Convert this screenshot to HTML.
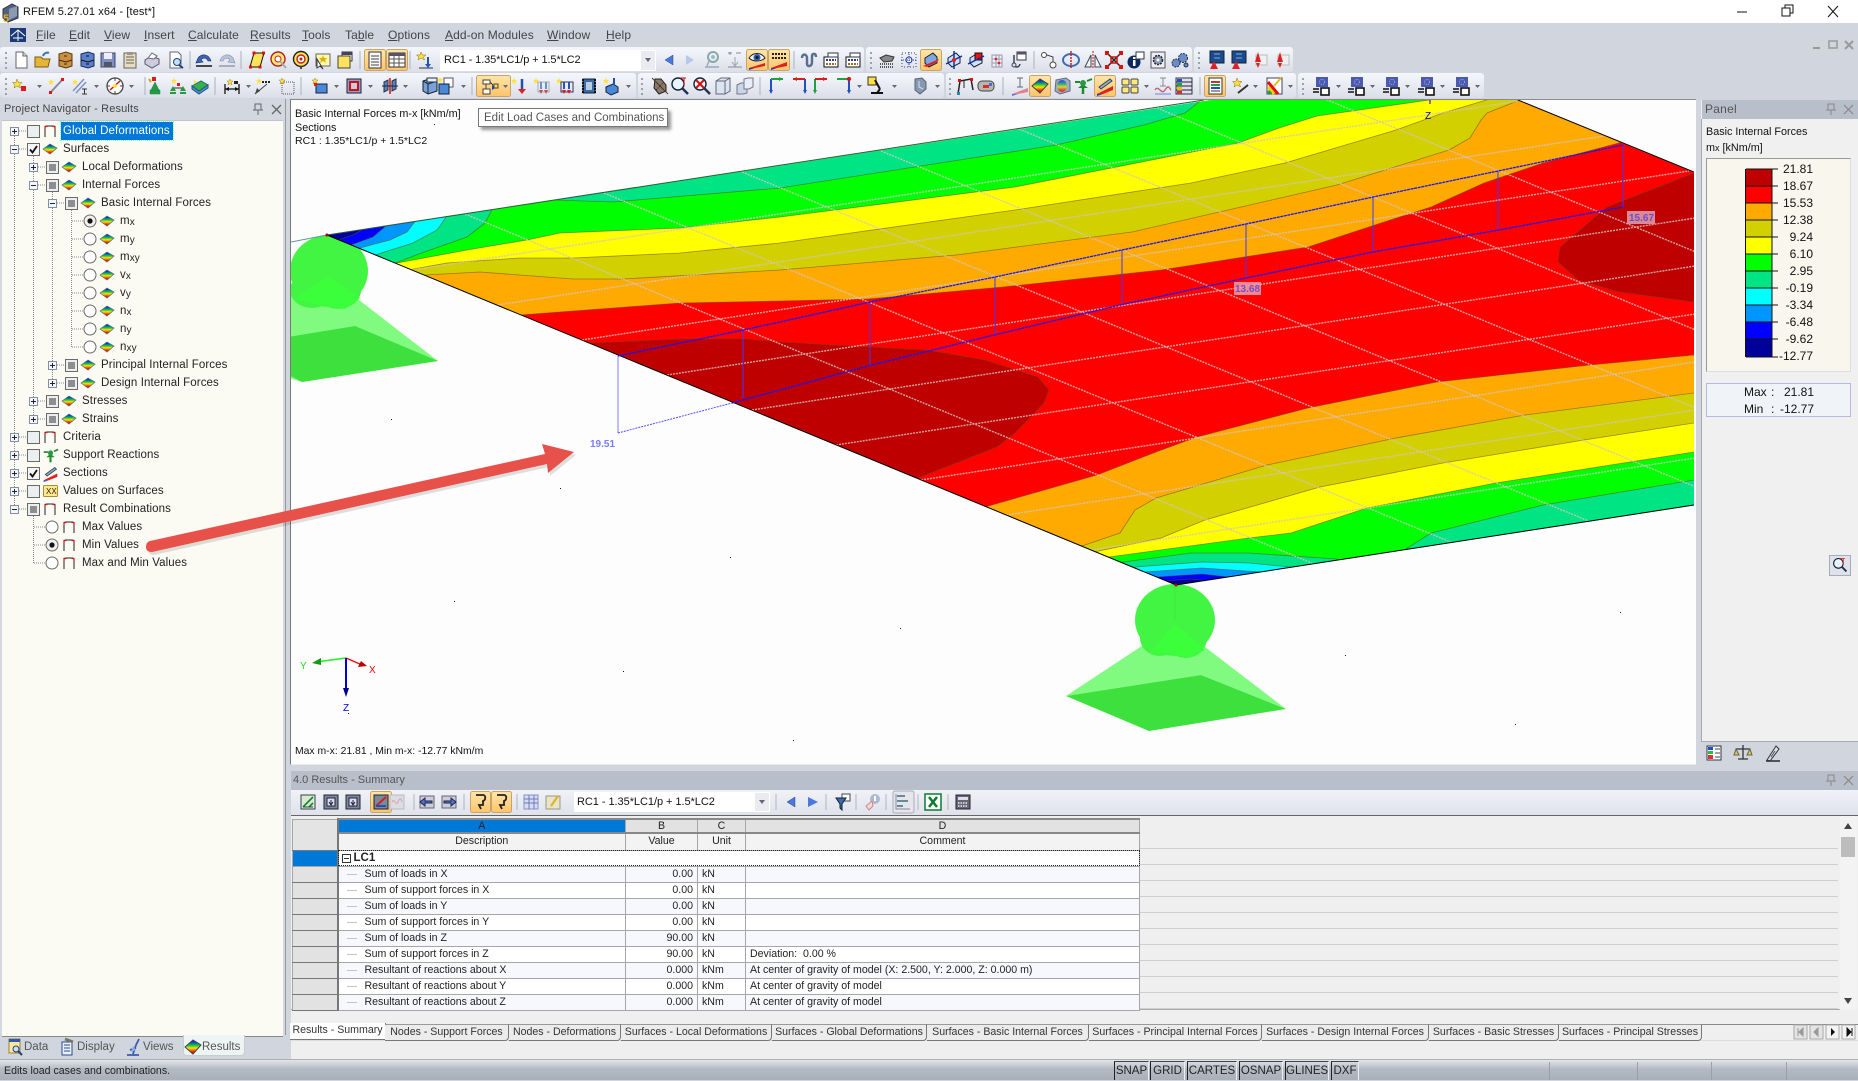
<!DOCTYPE html>
<html lang="en"><head><meta charset="utf-8"><title>RFEM 5.27.01 x64 - [test*]</title>
<style>
html,body{margin:0;padding:0}
body{position:relative;width:1858px;height:1080px;overflow:hidden;background:#d0d5de;font:11px "Liberation Sans",Arial,sans-serif;color:#222}
.a{position:absolute}
.t{position:absolute;white-space:nowrap;line-height:14px;height:14px}
.m{position:absolute;top:28px;font-size:12px;line-height:14px;color:#444;letter-spacing:.1px;white-space:nowrap}
.m u{text-decoration:underline}
.n{position:absolute;white-space:nowrap;font-size:11.5px;line-height:14px;color:#222;letter-spacing:.1px}
.n sub{font-size:10px;vertical-align:-1px;line-height:0}
.v{position:absolute;right:0;font-size:12px;line-height:14px;color:#111;text-align:right;width:60px}
svg{position:absolute;left:0;top:0;overflow:hidden}
table{border-collapse:collapse;table-layout:fixed;position:absolute;left:292px;top:818px;width:847px;font-size:10.6px;color:#222}
td{padding:0;border:1px solid #a6a6a6;overflow:hidden;white-space:nowrap;line-height:13px}
.rh{background:#e2e2e2;border-right:2px solid #777;border-bottom:1px solid #777}
.hd{background:#e2e2e2;text-align:center;border-bottom:2px solid #888;border-top:2px solid #888;font-size:10.6px}
.sh{background:#f3f3f3;text-align:center}
.d{padding-left:26px;background:linear-gradient(#c4c4c4,#c4c4c4) no-repeat 8px 50%/10px 1px}
.r{text-align:right;padding-right:4px}.u{padding-left:4px}.c{padding-left:4px}
.o td:not(.rh){background-color:#f6f8fd}
.w td:not(.rh){background-color:#fff}
.tab{position:absolute;top:1024px;height:15px;line-height:15px;background:#ececec;border:1px solid #777;border-top:1px solid #999;border-left:0;border-radius:0 0 4px 0;text-align:center;color:#333;font-size:10.6px;white-space:nowrap;overflow:hidden}
.sp{position:absolute;top:1061px;height:19px;line-height:19px;border-left:1px solid #222;border-top:1px solid #444;border-right:1px solid #eee;text-align:center;color:#222;font-size:11.5px;box-sizing:border-box}
</style></head><body>

<!-- title bar -->
<div class="a" style="left:0;top:0;width:1858px;height:23px;background:#fff"></div>
<div class="t" style="left:23px;top:5px;font-size:11px;color:#111;letter-spacing:.1px">RFEM 5.27.01 x64 - [test*]</div>

<!-- menu -->
<div class="m" style="left:36px"><u>F</u>ile</div><div class="m" style="left:69px"><u>E</u>dit</div><div class="m" style="left:104px"><u>V</u>iew</div><div class="m" style="left:144px"><u>I</u>nsert</div><div class="m" style="left:188px"><u>C</u>alculate</div><div class="m" style="left:250px"><u>R</u>esults</div><div class="m" style="left:302px"><u>T</u>ools</div><div class="m" style="left:345px">Ta<u>b</u>le</div><div class="m" style="left:388px"><u>O</u>ptions</div><div class="m" style="left:445px"><u>A</u>dd-on Modules</div><div class="m" style="left:547px"><u>W</u>indow</div><div class="m" style="left:606px"><u>H</u>elp</div>

<!-- toolbars -->
<div class="a" style="left:0;top:47px;width:864px;height:25px;background:linear-gradient(#f5f7fb,#dcdfe9);border-radius:3px"></div>
<div class="a" style="left:866px;top:47px;width:326px;height:25px;background:linear-gradient(#f5f7fb,#dcdfe9);border-radius:3px"></div>
<div class="a" style="left:1194px;top:47px;width:99px;height:25px;background:linear-gradient(#f5f7fb,#dcdfe9);border-radius:3px"></div>
<div class="a" style="left:0;top:73px;width:636px;height:25px;background:linear-gradient(#f5f7fb,#dcdfe9);border-radius:3px"></div>
<div class="a" style="left:638px;top:73px;width:306px;height:25px;background:linear-gradient(#f5f7fb,#dcdfe9);border-radius:3px"></div>
<div class="a" style="left:946px;top:73px;width:350px;height:25px;background:linear-gradient(#f5f7fb,#dcdfe9);border-radius:3px"></div>
<div class="a" style="left:1298px;top:73px;width:186px;height:25px;background:linear-gradient(#f5f7fb,#dcdfe9);border-radius:3px"></div>
<div class="a" style="left:440px;top:50px;width:216px;height:21px;background:#fff"></div>
<div class="a" style="left:641px;top:51px;width:14px;height:19px;background:#e9ebf0"></div>
<div class="t" style="left:444px;top:53px;font-size:11px;color:#111;letter-spacing:-.1px">RC1 - 1.35*LC1/p + 1.5*LC2</div>

<!-- navigator -->
<div class="a" style="left:0;top:99px;width:285px;height:936px;background:#d3d7df;border-right:1px solid #999"></div>
<div class="t" style="left:4px;top:102px;font-size:11px;color:#444;letter-spacing:.15px">Project Navigator - Results</div>
<div class="a" style="left:2px;top:120px;width:281px;height:915px;background:#fbfbf3;border-top:1px solid #c0c4cc;border-bottom:1px solid #888"></div>
<div class="a" style="left:61px;top:122px;width:112px;height:18px;background:#0078d7;outline:1px dotted #7fb"></div>

<div class="n" style="left:63px;top:124px;color:#fff">Global Deformations</div>
<div class="n" style="left:63px;top:142px">Surfaces</div>
<div class="n" style="left:82px;top:160px">Local Deformations</div>
<div class="n" style="left:82px;top:178px">Internal Forces</div>
<div class="n" style="left:101px;top:196px">Basic Internal Forces</div>
<div class="n" style="left:120px;top:214px">m<sub>x</sub></div>
<div class="n" style="left:120px;top:232px">m<sub>y</sub></div>
<div class="n" style="left:120px;top:250px">m<sub>xy</sub></div>
<div class="n" style="left:120px;top:268px">v<sub>x</sub></div>
<div class="n" style="left:120px;top:286px">v<sub>y</sub></div>
<div class="n" style="left:120px;top:304px">n<sub>x</sub></div>
<div class="n" style="left:120px;top:322px">n<sub>y</sub></div>
<div class="n" style="left:120px;top:340px">n<sub>xy</sub></div>
<div class="n" style="left:101px;top:358px">Principal Internal Forces</div>
<div class="n" style="left:101px;top:376px">Design Internal Forces</div>
<div class="n" style="left:82px;top:394px">Stresses</div>
<div class="n" style="left:82px;top:412px">Strains</div>
<div class="n" style="left:63px;top:430px">Criteria</div>
<div class="n" style="left:63px;top:448px">Support Reactions</div>
<div class="n" style="left:63px;top:466px">Sections</div>
<div class="n" style="left:63px;top:484px">Values on Surfaces</div>
<div class="n" style="left:63px;top:502px">Result Combinations</div>
<div class="n" style="left:82px;top:520px">Max Values</div>
<div class="n" style="left:82px;top:538px">Min Values</div>
<div class="n" style="left:82px;top:556px">Max and Min Values</div>

<!-- nav tabs -->
<div class="a" style="left:183px;top:1035px;width:60px;height:20px;background:#eef3f4;border-radius:0 0 4px 4px;border:1px solid #c4d0d0;border-top:0"></div>
<div class="t" style="left:24px;top:1040px;font-size:11.5px;color:#555">Data</div>
<div class="t" style="left:77px;top:1040px;font-size:11.5px;color:#555">Display</div>
<div class="t" style="left:143px;top:1040px;font-size:11.5px;color:#555">Views</div>
<div class="t" style="left:202px;top:1040px;font-size:11.5px;color:#555">Results</div>

<!-- viewport -->
<div class="a" style="left:290px;top:99px;width:1406px;height:666px;background:#fdfdfd;border-left:1px solid #777;border-top:1px solid #8a8a8a;box-sizing:border-box;border-bottom:1px solid #e8e8e8"></div>

<svg width="1858" height="1080" viewBox="0 0 1858 1080">
<defs>
<clipPath id="vp"><rect x="291" y="100" width="1403" height="664"/></clipPath>
<clipPath id="pl"><polygon points="327,235 1434,66 1800,216 1800,489 1176,585"/></clipPath>
</defs>
<g clip-path="url(#vp)">
<!-- left support -->
<polygon points="328,276 438,361 302,382 270,372 270,300" fill="#80fb80"/>
<polygon points="355,326 438,361 302,382 270,365 270,340" fill="#3ee03e"/>
<ellipse cx="329" cy="271" rx="39" ry="36" fill="#43f543"/>
<ellipse cx="312" cy="290" rx="22" ry="18" fill="#43f543"/><ellipse cx="338" cy="290" rx="23" ry="19" fill="#43f543"/>
<polygon points="328,276 360,298 345,309 320,305 300,300 296,298" fill="#3cff3c"/>
<!-- bottom support -->
<polygon points="1175,624 1286,709 1201,675 1066,696" fill="#80fb80"/>
<polygon points="1066,696 1201,675 1286,709 1149,731" fill="#3ee03e"/>
<ellipse cx="1175" cy="620" rx="40" ry="36" fill="#43f543"/>
<ellipse cx="1160" cy="638" rx="20" ry="18" fill="#43f543"/><ellipse cx="1186" cy="638" rx="21" ry="20" fill="#43f543"/>
<polygon points="1175,624 1205,650 1190,657 1170,654 1150,652" fill="#3cff3c"/>
<path d="M1175 586v34" stroke="#38e038" stroke-width="1" opacity=".6"/>
<line x1="291" y1="242" x2="327" y2="235" stroke="#5a9a9a" stroke-width="1"/>

<!-- plate -->
<g clip-path="url(#pl)" stroke="#6a4a1c" stroke-opacity=".6" stroke-width=".8">
<rect x="300" y="50" width="1500" height="560" fill="#f00" stroke="none"/>
<path fill="#bf0000" d="M590 343L680 339L747 339L780 342L927 350L985 360L1038 377L1049 390L1044 403L1015 433L997 447L918 478L800 480L500 340Z"/>
<path fill="#bf0000" d="M1800 120L1694 173L1607 207L1560 247L1558 262L1578 280L1619 292L1694 302L1800 320Z"/>
<!-- top side -->
<path fill="#ffaa00" d="M300 315L520 315L613 308L680 303L780 301L868 299L1003 287L1161 270L1308 247L1384 222L1431 207L1484 183L1543 163L1619 143L1800 0L200 0Z"/>
<path fill="#d2d000" d="M300 275L425 275L480 272L573 279L623 279L780 270L956 255L1132 232L1337 185L1449 150L1470 138L1481 120L1487 113L1525 98L1800 0L200 0Z"/>
<path fill="#ff0" d="M300 270L408 270L447 263L520 258L573 258L680 253L780 243L1015 210L1191 183L1285 163L1396 130L1443 113L1493 98L1800 0L200 0Z"/>
<path fill="#0f0" d="M300 263L397 263L467 250L527 240L560 233L680 228L780 217L1015 187L1238 143L1279 128L1317 116L1443 98L1800 0L200 0Z"/>
<path fill="#00e484" d="M300 263L395 263L430 250L467 237L485 223L493 208L493 90L200 100Z"/>
<path fill="#00e484" d="M553 200L613 202L780 188L1056 145L1144 125L1185 113L1204 98L1300 0L553 0Z"/>
<path fill="#0ff" d="M300 255L375 255L413 243L437 230L447 216L447 100L200 100Z"/>
<path fill="#0096ff" d="M300 248L360 248L390 240L407 232L416 220L416 100L200 100Z"/>
<path fill="#00f" d="M300 245L351 245L373 237L386 226L386 100L200 100Z"/>
<path fill="#00009a" d="M300 240L338 240L353 235L362 230L362 100L200 100Z"/>
<!-- bottom side -->
<path fill="#ffaa00" d="M985 507L1097 475L1156 452L1197 437L1308 408L1437 382L1590 365L1694 355L1850 340L1850 1000L1000 1000Z"/>
<path fill="#d2d000" d="M1079 547L1120 533L1135 510L1156 498L1267 465L1396 438L1525 415L1694 393L1850 370L1850 1000L1080 1000Z"/>
<path fill="#ff0" d="M1094 552L1161 538L1205 520L1320 487L1443 463L1584 440L1694 423L1850 400L1850 1000L1094 1000Z"/>
<path fill="#0f0" d="M1109 557L1249 538L1291 533L1367 508L1496 483L1694 452L1850 420L1850 1000L1109 1000Z"/>
<path fill="#00e484" d="M1123 562L1191 553L1249 553L1337 559L1337 700L1123 700Z"/>
<path fill="#00e484" d="M1401 552L1431 533L1543 505L1694 480L1850 450L1850 700L1401 700Z"/>
<path fill="#0ff" d="M1135 567L1202 562L1249 563L1291 567L1291 700L1135 700Z"/>
<path fill="#0096ff" d="M1144 572L1202 568L1261 572L1261 700L1144 700Z"/>
<path fill="#00f" d="M1156 577L1202 574L1229 577L1229 700L1156 700Z"/>
<path fill="#00009a" d="M1164 581L1190 579L1211 581L1211 700L1164 700Z"/>
<!-- grid -->
<g stroke="#d4c4c4" stroke-opacity=".85" stroke-width="1.4" stroke-dasharray="2 1" fill="none">
<path d="M412 270L1519 101M497 305L1604 136M582 340L1689 171M667 375L1774 206M752 410L1800 250M836 445L1800 298M921 480L1800 346M1006 515L1800 394M1091 550L1800 442"/>
<path d="M465 214L1314 564M604 193L1453 543M742 172L1591 522M881 151L1730 501M1019 129L1800 451M1157 108L1800 373M1296 87L1800 295"/>
</g>
</g>
<!-- plate edges -->
<path d="M327 235L1176 585L1694 505M1518 100L1694 172" fill="none" stroke="#000" stroke-width="1"/>
<path d="M327 235L1204 100" fill="none" stroke="#2a5a40" stroke-width="1"/>
<circle cx="327" cy="235" r="1.5" fill="#a00"/><circle cx="1176" cy="585" r="1.5" fill="#a00"/>

<!-- section diagram -->
<path d="M618 356V433" stroke="#8080ff" fill="none"/>
<path d="M743 330V398M870 302V366M995 277V335M1122 250V305M1246 224V278M1373 197V252M1498 171V230M1623 145V207" stroke="#3a3aff" stroke-width="1" fill="none"/>
<path d="M618 433L732 403" stroke="#5050ff" stroke-dasharray="2 1" fill="none"/>
<path d="M732 403L780 390L868 366L994 335L1120 305L1246 278L1373 252L1499 230L1623 207" stroke="#1515ff" stroke-width="1.3" stroke-dasharray="3 .6" fill="none"/>
<path d="M618 356L743 330L780 322L870 302L995 277L1122 250L1246 224L1373 197L1498 171L1623 145" stroke="#1515ff" stroke-width="1.3" stroke-dasharray="3 .6" fill="none"/>
<rect x="1234" y="282" width="27" height="13" fill="#f6a0a8" opacity=".85"/>
<rect x="1627" y="211" width="28" height="13" fill="#e0a0b0" opacity=".85"/>
<g font-family="Liberation Sans,Arial,sans-serif" font-weight="bold" font-size="10">
<text x="590" y="447" fill="#7a7aff">19.51</text>
<text x="1235" y="292" fill="#7050d0">13.68</text>
<text x="1629" y="221" fill="#6a50c8">15.67</text>
</g>
<text x="1425" y="119" font-family="Liberation Sans,Arial,sans-serif" font-size="10" fill="#0000d0">Z</text>
<path d="M1430 100v4" stroke="#0000d0"/>
<!-- specks -->
<g fill="#111"><rect x="434" y="124" width="1" height="1"/><rect x="391" y="419" width="1" height="1"/><rect x="560" y="488" width="1" height="1"/><rect x="900" y="628" width="1" height="1"/><rect x="1345" y="655" width="1" height="1"/><rect x="1620" y="612" width="1" height="1"/><rect x="1515" y="724" width="1" height="1"/><rect x="793" y="740" width="1" height="1"/><rect x="730" y="557" width="1" height="1"/><rect x="454" y="601" width="1" height="1"/><rect x="623" y="671" width="1" height="1"/><rect x="348" y="713" width="1" height="1"/></g>
<!-- axes -->
<path d="M346 658L316 662" stroke="#22ee22" stroke-width="1.5"/><path d="M312 663L321 658L321 665Z" fill="#119911"/>
<path d="M346 658L362 665" stroke="#f00" stroke-width="1.3"/><path d="M367 666L358 667L361 661Z" fill="#b00"/>
<path d="M346 658V690" stroke="#0000e0" stroke-width="2"/><path d="M346 697L343 688L349 688Z" fill="#000090"/>
<g font-family="Liberation Sans,Arial,sans-serif" font-size="10"><text x="300" y="669" fill="#22dd22">Y</text><text x="369" y="673" fill="#f00">X</text><text x="343" y="711" fill="#0000e0">Z</text></g>
</g>
</svg>

<!-- viewport text -->
<div class="t" style="left:295px;top:107px;font-size:10.8px;color:#111">Basic Internal Forces m-x [kNm/m]</div>
<div class="t" style="left:295px;top:121px;font-size:10.8px;color:#111">Sections</div>
<div class="t" style="left:295px;top:134px;font-size:10.5px;color:#111">RC1 : 1.35*LC1/p + 1.5*LC2</div>
<div class="t" style="left:295px;top:745px;font-size:10.4px;color:#111">Max m-x: 21.81 , Min m-x: -12.77 kNm/m</div>
<div class="a" style="left:478px;top:108px;width:188px;height:17px;background:#fff;border:1px solid #777;box-shadow:3px 3px 3px #999"></div>
<div class="t" style="left:484px;top:111px;font-size:11.5px;color:#555">Edit Load Cases and Combinations</div>

<!-- right panel -->
<div class="a" style="left:1701px;top:100px;width:157px;height:19px;background:#b8bfca;border-left:1px solid #eee;box-sizing:border-box"></div>
<div class="a" style="left:1701px;top:119px;width:157px;height:623px;background:#f0f0f0;border-left:1px solid #aaa;border-bottom:1px solid #aaa;box-sizing:border-box"></div>
<div class="t" style="left:1705px;top:102px;font-size:12px;color:#555;letter-spacing:.25px">Panel</div>
<div class="t" style="left:1706px;top:125px;font-size:10.8px;color:#111">Basic Internal Forces</div>
<div class="t" style="left:1706px;top:141px;font-size:10.8px;color:#111">m<span style="font-size:9px">x</span> [kNm/m]</div>
<div class="a" style="left:1706px;top:158px;width:145px;height:214px;background:#f9f6ee;border:1px solid #999;border-right-color:#ddd;border-bottom-color:#ddd;box-sizing:border-box"></div>
<div class="a" style="left:1753px;top:162px;width:60px;height:204px">
<div class="v" style="top:0">21.81</div><div class="v" style="top:17px">18.67</div><div class="v" style="top:34px">15.53</div><div class="v" style="top:51px">12.38</div><div class="v" style="top:68px">9.24</div><div class="v" style="top:85px">6.10</div><div class="v" style="top:102px">2.95</div><div class="v" style="top:119px">-0.19</div><div class="v" style="top:136px">-3.34</div><div class="v" style="top:153px">-6.48</div><div class="v" style="top:170px">-9.62</div><div class="v" style="top:187px">-12.77</div></div>
<div class="a" style="left:1706px;top:383px;width:145px;height:34px;background:#f0f4f8;border:1px solid #b8b8e4;box-sizing:border-box"></div>
<div class="t" style="left:1744px;top:385px;font-size:12px;color:#111">Max</div><div class="t" style="left:1771px;top:385px;font-size:12px;color:#111">:</div><div class="t" style="left:1784px;top:385px;width:30px;text-align:right;font-size:12px;color:#111">21.81</div>
<div class="t" style="left:1744px;top:402px;font-size:12px;color:#111">Min</div><div class="t" style="left:1771px;top:402px;font-size:12px;color:#111">:</div><div class="t" style="left:1774px;top:402px;width:40px;text-align:right;font-size:12px;color:#111">-12.77</div>
<div class="a" style="left:1829px;top:555px;width:22px;height:21px;background:#dfe2e8;border:1px solid #aab;box-sizing:border-box"></div>

<!-- results panel -->
<div class="a" style="left:291px;top:771px;width:1567px;height:19px;background:#b9bfca"></div>
<div class="t" style="left:293px;top:773px;font-size:11px;color:#555">4.0 Results - Summary</div>
<div class="a" style="left:291px;top:790px;width:1567px;height:25px;background:linear-gradient(#f0f2f7,#dfe2ea)"></div>
<div class="a" style="left:574px;top:792px;width:196px;height:20px;background:#fff"></div>
<div class="a" style="left:755px;top:793px;width:14px;height:18px;background:#e9ebf0"></div>
<div class="t" style="left:577px;top:795px;font-size:11px;color:#111;letter-spacing:-.05px">RC1 - 1.35*LC1/p + 1.5*LC2</div>
<div class="a" style="left:291px;top:815px;width:1567px;height:245px;background:#efefef;border-top:1px solid #666;box-sizing:border-box"></div>
<div class="a" style="left:1140px;top:819px;width:698px;height:190px;background:repeating-linear-gradient(#efefef 0 15px,#cfcfcf 15px 16px) 0 14px"></div>
<div class="a" style="left:291px;top:1009px;width:1549px;height:1px;background:#aaa"></div>

<table><colgroup><col style="width:45px"><col style="width:288px"><col style="width:72px"><col style="width:48px"><col style="width:394px"></colgroup>
<tr style="height:14px"><td class="rh" rowspan="2" style="background:#e4e4e4"></td><td class="hd" style="background:#0078d7;line-height:11px">A</td><td class="hd" style="line-height:11px">B</td><td class="hd" style="line-height:11px">C</td><td class="hd" style="line-height:11px">D</td></tr>
<tr style="height:17px"><td class="sh">Description</td><td class="sh">Value</td><td class="sh">Unit</td><td class="sh">Comment</td></tr>
<tr style="height:16px"><td style="background:#0078d7;border-right:2px solid #777"></td><td colspan="4" style="background:#fff;outline:1px dotted #222;outline-offset:-1px;font-weight:bold;font-size:11.5px;padding-left:15px;position:relative"><span style="position:absolute;left:3px;top:3px;width:7px;height:7px;border:1px solid #333"></span><span style="position:absolute;left:5px;top:7px;width:5px;height:1px;background:#333"></span>LC1</td></tr>
<tr class="o" style="height:16px"><td class="rh"></td><td class="d">Sum of loads in X</td><td class="r">0.00</td><td class="u">kN</td><td class="c"></td></tr>
<tr class="w" style="height:16px"><td class="rh"></td><td class="d">Sum of support forces in X</td><td class="r">0.00</td><td class="u">kN</td><td class="c"></td></tr>
<tr class="o" style="height:16px"><td class="rh"></td><td class="d">Sum of loads in Y</td><td class="r">0.00</td><td class="u">kN</td><td class="c"></td></tr>
<tr class="w" style="height:16px"><td class="rh"></td><td class="d">Sum of support forces in Y</td><td class="r">0.00</td><td class="u">kN</td><td class="c"></td></tr>
<tr class="o" style="height:16px"><td class="rh"></td><td class="d">Sum of loads in Z</td><td class="r">90.00</td><td class="u">kN</td><td class="c"></td></tr>
<tr class="w" style="height:16px"><td class="rh"></td><td class="d">Sum of support forces in Z</td><td class="r">90.00</td><td class="u">kN</td><td class="c">Deviation:&nbsp; 0.00 %</td></tr>
<tr class="o" style="height:16px"><td class="rh"></td><td class="d">Resultant of reactions about X</td><td class="r">0.000</td><td class="u">kNm</td><td class="c">At center of gravity of model (X: 2.500, Y: 2.000, Z: 0.000 m)</td></tr>
<tr class="w" style="height:16px"><td class="rh"></td><td class="d">Resultant of reactions about Y</td><td class="r">0.000</td><td class="u">kNm</td><td class="c">At center of gravity of model</td></tr>
<tr class="o" style="height:16px"><td class="rh"></td><td class="d">Resultant of reactions about Z</td><td class="r">0.000</td><td class="u">kNm</td><td class="c">At center of gravity of model</td></tr>
</table>

<!-- scrollbar -->
<div class="a" style="left:1840px;top:816px;width:17px;height:194px;background:#f3f3f3"></div>
<div class="a" style="left:1841px;top:837px;width:14px;height:20px;background:#bdbdbd"></div>

<!-- tabs -->
<div class="a" style="left:290px;top:1024px;width:1568px;height:1px;background:#888"></div>
<div class="a" style="left:290px;top:1040px;width:1568px;height:1px;background:#ddd"></div>
<div class="tab" style="left:290px;width:95px;top:1023px;height:16px;background:#fff;border:0;border-right:1px solid #777;border-bottom:1px solid #777;border-radius:0">Results - Summary</div>
<div class="tab" style="left:385px;width:123px">Nodes - Support Forces</div>
<div class="tab" style="left:509px;width:111px">Nodes - Deformations</div>
<div class="tab" style="left:621px;width:150px">Surfaces - Local Deformations</div>
<div class="tab" style="left:772px;width:154px">Surfaces - Global Deformations</div>
<div class="tab" style="left:927px;width:161px">Surfaces - Basic Internal Forces</div>
<div class="tab" style="left:1089px;width:172px">Surfaces - Principal Internal Forces</div>
<div class="tab" style="left:1262px;width:166px">Surfaces - Design Internal Forces</div>
<div class="tab" style="left:1429px;width:129px">Surfaces - Basic Stresses</div>
<div class="tab" style="left:1559px;width:142px">Surfaces - Principal Stresses</div>

<!-- status -->
<div class="a" style="left:0;top:1059px;width:1858px;height:21px;background:linear-gradient(#e2e5ea,#b4bac4 45%,#aab0ba);border-top:1px solid #b0b0b0;box-sizing:border-box"></div>
<div class="t" style="left:4px;top:1064px;font-size:10.6px;color:#222">Edits load cases and combinations.</div>
<div class="sp" style="left:1114px;width:35px">SNAP</div><div class="sp" style="left:1150px;width:35px">GRID</div><div class="sp" style="left:1187px;width:50px">CARTES</div><div class="sp" style="left:1239px;width:44px">OSNAP</div><div class="sp" style="left:1285px;width:44px">GLINES</div><div class="sp" style="left:1331px;width:28px">DXF</div>
<div class="a" style="left:1549px;top:1062px;width:1px;height:18px;background:#98a0aa"></div><div class="a" style="left:1637px;top:1062px;width:1px;height:18px;background:#98a0aa"></div><div class="a" style="left:1711px;top:1062px;width:1px;height:18px;background:#98a0aa"></div><div class="a" style="left:1786px;top:1062px;width:1px;height:18px;background:#98a0aa"></div>

<!-- icons + tree graphics -->
<svg width="1858" height="1080" viewBox="0 0 1858 1080">
<defs>
<linearGradient id="hl" x1="0" y1="0" x2="0" y2="1"><stop offset="0" stop-color="#ffe6a8"/><stop offset="1" stop-color="#ffc46a"/></linearGradient>
<linearGradient id="rb" x1="0" y1="0" x2="0" y2="1"><stop offset=".12" stop-color="#0a30e0"/><stop offset=".38" stop-color="#10c840"/><stop offset=".58" stop-color="#ffe000"/><stop offset=".85" stop-color="#f01800"/></linearGradient>
<symbol id="sf" viewBox="0 0 16 12"><path d="M1 6L8 1L15 5L8 11Z" fill="url(#rb)" stroke="#5a6a7a" stroke-width=".7"/></symbol>
<symbol id="fr" viewBox="0 0 16 14"><path d="M3 13V4Q3 2 5 2H11Q13 2 13 4V13" fill="none" stroke="#222" stroke-width="1"/><path d="M3 5V2.500H5.500M13 5V2.500H10.500" fill="none" stroke="#d01818" stroke-width="1.200"/></symbol>
<symbol id="ex" viewBox="0 0 9 9"><rect x=".5" y=".5" width="8" height="8" fill="#f4f6fa" stroke="#8090a8"/><path d="M2 4.5H7" stroke="#223" /></symbol>
<symbol id="ep" viewBox="0 0 9 9"><rect x=".5" y=".5" width="8" height="8" fill="#f4f6fa" stroke="#8090a8"/><path d="M2 4.5H7M4.5 2V7" stroke="#223"/></symbol>
<symbol id="cb" viewBox="0 0 13 13"><rect x=".5" y=".5" width="12" height="12" fill="#eceff0" stroke="#6a6a6a"/></symbol>
<symbol id="cp" viewBox="0 0 13 13"><rect x=".5" y=".5" width="12" height="12" fill="#eceff0" stroke="#6a6a6a"/><rect x="3" y="3" width="7" height="7" fill="#8e8e8e"/></symbol>
<symbol id="cc" viewBox="0 0 13 13"><rect x=".5" y=".5" width="12" height="12" fill="#f4f4f4" stroke="#6a6a6a"/><path d="M3 6.5L5.5 9.5L10 3" fill="none" stroke="#111" stroke-width="1.8"/></symbol>
<symbol id="rd" viewBox="0 0 14 14"><circle cx="7" cy="7" r="6" fill="#fff" stroke="#6a6a6a"/></symbol>
<symbol id="rs" viewBox="0 0 14 14"><circle cx="7" cy="7" r="6" fill="#f0f0f0" stroke="#6a6a6a"/><circle cx="7" cy="7" r="2.6" fill="#111"/></symbol>

<symbol id="doc" viewBox="0 0 20 20"><path d="M5 2H12L16 6V18H5Z" fill="#fff" stroke="#666"/><path d="M12 2V6H16" fill="#ddd" stroke="#666"/></symbol>
<symbol id="open" viewBox="0 0 20 20"><path d="M2 7H8L10 9H17L15 17H2Z" fill="#e5b53a" stroke="#7a5a10"/><path d="M10 6C11 3 14 2 16 3" stroke="#3a6fc0" fill="none" stroke-width="2"/></symbol>
<symbol id="cab" viewBox="0 0 20 20"><path d="M4 4L11 2L17 4V16L11 18L4 16Z" fill="#c89040" stroke="#5a3a10"/><path d="M4 10L11 12L17 10M9 6H12M9 14H12" stroke="#4a2a08" fill="none"/></symbol>
<symbol id="cabb" viewBox="0 0 20 20"><path d="M4 4L11 2L17 4V16L11 18L4 16Z" fill="#5a80c8" stroke="#1a2a60"/><path d="M4 10L11 12L17 10M9 6H12M9 14H12" stroke="#112" fill="none"/></symbol>
<symbol id="save" viewBox="0 0 20 20"><rect x="3" y="3" width="14" height="14" fill="#7d8fc8" stroke="#445"/><rect x="6" y="3" width="8" height="6" fill="#eef"/><rect x="6" y="12" width="8" height="5" fill="#556"/></symbol>
<symbol id="clip" viewBox="0 0 20 20"><rect x="4" y="3" width="12" height="15" fill="#e6dcc4" stroke="#665"/><path d="M6 7H14M6 10H14M6 13H14" stroke="#665"/><rect x="7" y="2" width="6" height="3" fill="#998"/></symbol>
<symbol id="print" viewBox="0 0 20 20"><path d="M3 10L9 6L17 9V14L10 18L3 14Z" fill="#ccd" stroke="#556"/><path d="M6 8L10 3L15 6L12 9Z" fill="#fff" stroke="#667"/></symbol>
<symbol id="prev" viewBox="0 0 20 20"><path d="M4 2H12L15 5V18H4Z" fill="#fff" stroke="#667"/><circle cx="11" cy="12" r="3.5" fill="#bfe0ff" stroke="#247"/><path d="M13 15L17 18" stroke="#247" stroke-width="2"/></symbol>
<symbol id="undo" viewBox="0 0 20 20"><path d="M4 8C8 3 15 4 17 11L14 11C13 8 9 7 7 10L9 12L2 13Z" fill="#3a64b8" stroke="#1a2a60" stroke-width=".6"/><path d="M2 16H18" stroke="#111" stroke-width="1.5"/></symbol>
<symbol id="redo" viewBox="0 0 20 20"><path d="M16 8C12 3 5 4 3 11L6 11C7 8 11 7 13 10L11 12L18 13Z" fill="#b8c4dc" stroke="#8090a8" stroke-width=".6"/><path d="M2 16H18" stroke="#99a" stroke-width="1.5"/></symbol>
<symbol id="para" viewBox="0 0 20 20"><path d="M7 3H17L13 17H3Z" fill="#ffe45a" stroke="#111"/><rect x="5.500" y="1.500" width="3" height="3" fill="#e01010"/><rect x="15" y="1.500" width="3" height="3" fill="#e01010"/><rect x="2" y="15.500" width="3" height="3" fill="#e01010"/><rect x="11.500" y="15.500" width="3" height="3" fill="#e01010"/></symbol>
<symbol id="tgt" viewBox="0 0 20 20"><circle cx="9" cy="9" r="7" fill="#ffe878" stroke="#b02020" stroke-width="1.400"/><circle cx="9" cy="9" r="3" fill="#fff" stroke="#c02020"/><path d="M11 11L17 18" stroke="#aaa" stroke-width="2"/></symbol>
<symbol id="tgt2" viewBox="0 0 20 20"><circle cx="10" cy="9" r="7.500" fill="#ffe050" stroke="#222" stroke-width="1.400"/><circle cx="10" cy="9" r="4" fill="#fff" stroke="#c02020" stroke-width="1.400"/><circle cx="10" cy="9" r="1.500" fill="#c02020"/><path d="M10 16V19" stroke="#444" stroke-width="2"/></symbol>
<symbol id="stc" viewBox="0 0 20 20"><rect x="3" y="4" width="14" height="12" fill="#fff8b0" stroke="#666"/><path d="M10 5L11 8H14L12 10L13 13L10 11L7 13L8 10L6 8H9Z" fill="#e0b000"/><path d="M4 9L4 18L7 16L10 19Z" fill="#fff" stroke="#333"/></symbol>
<symbol id="win" viewBox="0 0 20 20"><rect x="7" y="2" width="10" height="9" fill="#fff" stroke="#334"/><rect x="7" y="2" width="10" height="3" fill="#445"/><rect x="3" y="6" width="12" height="12" fill="#ffe060" stroke="#443"/></symbol>
<symbol id="list" viewBox="0 0 20 20"><rect x="4" y="2" width="12" height="16" fill="#fafafa" stroke="#333"/><path d="M6 6H14M6 9H14M6 12H14M6 15H14" stroke="#444"/></symbol>
<symbol id="tbl" viewBox="0 0 20 20"><rect x="2" y="3" width="16" height="14" fill="#fff" stroke="#333"/><rect x="2" y="3" width="16" height="3" fill="#556"/><path d="M2 9H18M2 13H18M7 6V17M12 6V17" stroke="#555"/></symbol>
<symbol id="stdn" viewBox="0 0 20 20"><path d="M6 2L7.500 5H11L8.500 7L9.500 10L6 8L3 10L4 7L1.500 5H5Z" fill="#ffe040" stroke="#887010" stroke-width=".5"/><path d="M13 7V16" stroke="#2255bb" stroke-width="2"/><path d="M10 14L13 18L16 14" fill="#2255bb"/><path d="M4 18H18" stroke="#333"/></symbol>
<symbol id="la" viewBox="0 0 20 20"><path d="M14 5L6 10L14 15Z" fill="#4a78e0" stroke="#234"  stroke-width=".4"/></symbol>
<symbol id="ra" viewBox="0 0 20 20"><path d="M6 5L14 10L6 15Z" fill="#b8c8ec"/></symbol>
<symbol id="pin" viewBox="0 0 20 20"><circle cx="11" cy="7" r="5" fill="none" stroke="#8aa" stroke-width="2"/><circle cx="11" cy="7" r="2" fill="#9bc"/><path d="M7 11L5 16M3 17H17" stroke="#9ab" stroke-width="1.500"/></symbol>
<symbol id="xxd" viewBox="0 0 20 20"><path d="M10 7V15M7 12L10 16L13 12" stroke="#9aa" fill="none"/><path d="M3 17H17M3 3H7M5 2V5M11 3H16" stroke="#889"/></symbol>
<symbol id="eye" viewBox="0 0 20 20"><path d="M2 8C6 2 14 2 18 8C14 12 6 12 2 8Z" fill="#f4f4f4" stroke="#223"/><circle cx="10" cy="7.500" r="3.500" fill="#2860b8"/><circle cx="10" cy="7.500" r="1.500" fill="#111"/><path d="M2 18L18 13V16L8 18Z" fill="#d22"/><path d="M2 18H8L2 20Z" fill="#2040c0"/></symbol>
<symbol id="xxo" viewBox="0 0 20 20"><path d="M3 4H17M3 8H17" stroke="#222" stroke-width="2" stroke-dasharray="2 1"/><path d="M2 18L18 12V16L8 18Z" fill="#d22"/><path d="M2 18H8L2 20Z" fill="#2040c0"/></symbol>
<symbol id="hook" viewBox="0 0 20 20"><path d="M3 8C3 3 8 4 8 8V14C8 17 13 17 13 12V6C13 3 17 3 17 7" fill="none" stroke="#5a7090" stroke-width="2.500"/></symbol>
<symbol id="bar1" viewBox="0 0 20 20"><rect x="3" y="7" width="14" height="10" fill="#fff" stroke="#111"/><rect x="7" y="3" width="10" height="4" fill="#fff" stroke="#334"/><path d="M5 10H15" stroke="#2040a0" stroke-width="2" stroke-dasharray="2 1"/><path d="M5 14H15" stroke="#a07020" stroke-width="2" stroke-dasharray="2 1"/></symbol>
<symbol id="hand" viewBox="0 0 20 20"><path d="M3 8L9 5L17 7L15 11L7 12Z" fill="#888" stroke="#333"/><path d="M3 14H17M3 17H17" stroke="#555" stroke-width="2" stroke-dasharray="1 1"/></symbol>
<symbol id="node" viewBox="0 0 20 20"><circle cx="10" cy="10" r="3" fill="#fff" stroke="#23a"/><path d="M10 2V18M2 10H18" stroke="#2244aa" stroke-dasharray="1 1"/><path d="M3 3H17V17H3Z" fill="none" stroke="#446" stroke-dasharray="1 2"/></symbol>
<symbol id="cube" viewBox="0 0 20 20"><path d="M4 8L12 3L16 7V13L8 17L4 13Z" fill="#7fa8e0" stroke="#123"/><path d="M2 16L18 9L16 12L6 17Z" fill="#d22"/></symbol>
<symbol id="pln1" viewBox="0 0 20 20"><path d="M4 8L12 3L16 7V13L8 17L4 13Z" fill="#cfe0ff" stroke="#123"/><path d="M10 1V19M2 14L18 6" stroke="#1030a0" stroke-width="1.500"/><circle cx="10" cy="10" r="2" fill="#d22"/></symbol>
<symbol id="pln2" viewBox="0 0 20 20"><path d="M4 8L12 3L16 7V13L8 17L4 13Z" fill="#cfe0ff" stroke="#123"/><rect x="9" y="3" width="7" height="7" fill="#f01010" stroke="#111"/><path d="M2 14L18 6" stroke="#1030a0" stroke-width="1.500"/></symbol>
<symbol id="grd" viewBox="0 0 20 20"><path d="M5 5H15V17H5ZM5 9H15M5 13H15M9 5V17M12 5V17" fill="#eef" stroke="#99a"/><circle cx="9" cy="9" r="1.300" fill="#d22"/><circle cx="12" cy="13" r="1.300" fill="#d22"/></symbol>
<symbol id="bolt" viewBox="0 0 20 20"><rect x="8" y="2" width="9" height="8" fill="#fff" stroke="#334"/><rect x="8" y="2" width="9" height="2.500" fill="#556"/><path d="M5 5V14C5 18 10 18 11 14" stroke="#345" fill="none" stroke-width="1.500"/><circle cx="5" cy="15" r="2" fill="#dde" stroke="#345"/></symbol>
<symbol id="rt1" viewBox="0 0 20 20"><circle cx="5" cy="5" r="2.500" fill="#fff" stroke="#444"/><circle cx="14" cy="15" r="3" fill="#fff" stroke="#444"/><path d="M8 5L14 7V12" stroke="#444" fill="none"/></symbol>
<symbol id="rt2" viewBox="0 0 20 20"><ellipse cx="10" cy="10" rx="8" ry="6" fill="none" stroke="#406cb0" stroke-width="2"/><path d="M10 1V19" stroke="#d01010" stroke-dasharray="2 1" stroke-width="1.400"/></symbol>
<symbol id="mir" viewBox="0 0 20 20"><path d="M2 17L8 5V17ZM18 17L12 5V17Z" fill="#f4f4f4" stroke="#445"/><path d="M10 1V19" stroke="#d01010" stroke-dasharray="2 1"/></symbol>
<symbol id="xr" viewBox="0 0 20 20"><path d="M3 3L17 17M17 3L3 17" stroke="#222" stroke-width="1.500"/><path d="M7 7H13V13H7Z" fill="none" stroke="#d01010" stroke-width="1.500"/><g fill="#e01010"><rect x="1" y="1" width="4" height="4"/><rect x="15" y="1" width="4" height="4"/><rect x="1" y="15" width="4" height="4"/><rect x="15" y="15" width="4" height="4"/></g></symbol>
<symbol id="inf" viewBox="0 0 20 20"><circle cx="8" cy="12" r="6.500" fill="#0c2a60"/><rect x="7" y="10" width="2.500" height="6" fill="#fff"/><rect x="7" y="7" width="2.500" height="2" fill="#fff"/><rect x="10" y="2" width="8" height="7" fill="#fff" stroke="#334"/></symbol>
<symbol id="gear" viewBox="0 0 20 20"><rect x="3" y="2" width="14" height="16" fill="#eee" stroke="#556"/><circle cx="10" cy="10" r="4.500" fill="#8a9ab0" stroke="#223" stroke-width="1.500" stroke-dasharray="2 1"/><circle cx="10" cy="10" r="1.500" fill="#fff"/></symbol>
<symbol id="grs" viewBox="0 0 20 20"><circle cx="6" cy="13" r="4" fill="#6a8ac8" stroke="#234" stroke-dasharray="2 1"/><circle cx="13" cy="8" r="4.500" fill="#6a8ac8" stroke="#234" stroke-dasharray="2 1"/><circle cx="16" cy="15" r="2" fill="#6a8ac8" stroke="#234"/></symbol>
<symbol id="bkr" viewBox="0 0 20 20"><rect x="4" y="1" width="14" height="12" fill="#1a4a90" stroke="#123"/><path d="M8 4L14 4M8 8L14 8" stroke="#8ac"/><path d="M8 11L12 19L4 19Z" fill="#e02020"/></symbol>
<symbol id="ptr" viewBox="0 0 20 20"><rect x="7" y="5" width="11" height="10" fill="#f0f0f0" stroke="#bbb"/><path d="M9 2L12 12H6ZM7 13H11L9 18Z" fill="#e02020"/></symbol>

<symbol id="st" viewBox="0 0 20 20"><path d="M7 3L8.500 6.500H12L9.500 9L10.500 12L7 10L4 12L5 9L2.500 6.500H6Z" fill="#ffe040" stroke="#887010" stroke-width=".5"/><rect x="11" y="10" width="5" height="5" fill="#e01818"/></symbol>
<symbol id="ln" viewBox="0 0 20 20"><path d="M5 3L6 5H8L6.500 6.500L7 9L5 7.500L3 9L3.500 6.500L2 5H4Z" fill="#ffe040"/><path d="M4 17L17 3" stroke="#889" stroke-width="2"/><rect x="15" y="2" width="3" height="3" fill="#e01818"/><rect x="3" y="15" width="3" height="3" fill="#e01818"/></symbol>
<symbol id="xl" viewBox="0 0 20 20"><path d="M5 3L6 5H8L6.500 6.500L7 9L5 7.500L3 9L3.500 6.500L2 5H4Z" fill="#ffe040"/><path d="M3 15L14 3M6 17L16 6" stroke="#8090c0" stroke-width="1.500"/><path d="M12 13H17M14.500 13V18M12 18H17" stroke="#333"/></symbol>
<symbol id="clk" viewBox="0 0 20 20"><circle cx="10" cy="10" r="8" fill="#fff" stroke="#444" stroke-width="1.300"/><path d="M5 14L15 5" stroke="#d01010" stroke-width="1.500"/><path d="M10 2V5M2 10H5M15 10H18M10 15V18" stroke="#444"/><circle cx="10" cy="10" r="2" fill="#ffe040"/></symbol>
<symbol id="prs" viewBox="0 0 20 20"><rect x="6" y="1" width="4" height="4" fill="#e01818"/><path d="M9 6L13 14H5ZM4 14H14V18H4Z" fill="#2a9a40" stroke="#185" stroke-width=".5"/><path d="M3 3L5 6" stroke="#ca0" stroke-width="2"/></symbol>
<symbol id="prs2" viewBox="0 0 20 20"><path d="M6 2L7 4H9L7.500 5.500L8 8L6 6.500L4 8L4.500 5.500L3 4H5Z" fill="#ffe040"/><path d="M5 12H15" stroke="#333"/><path d="M5 10L8 15H2ZM15 10L18 15H12Z" fill="#2a9a40"/><path d="M2 17H8M12 17H18" stroke="#2a9a40" stroke-width="2"/><rect x="9" y="7" width="3" height="3" fill="#e01818"/></symbol>
<symbol id="plt" viewBox="0 0 20 20"><path d="M2 10L11 5L18 9L9 15Z" fill="#38b050" stroke="#175"/><path d="M2 10V13L9 18L18 12V9L9 15Z" fill="#4a90d0" stroke="#257"/><path d="M4 3L5 5H7L5.500 6.500L4 8Z" fill="#ffe040"/></symbol>
<symbol id="dim" viewBox="0 0 20 20"><path d="M3 8V18M17 8V18M3 13H17" stroke="#111" stroke-width="1.300"/><path d="M3 13L7 11V15ZM17 13L13 11V15Z" fill="#111"/><path d="M8 3L9 5H11L9.500 6.500L10 9L8 7.500L6 9L6.500 6.500L5 5H7Z" fill="#ffe040" stroke="#887010" stroke-width=".4"/><rect x="12" y="5" width="4" height="3" fill="#222"/></symbol>
<symbol id="xxa" viewBox="0 0 20 20"><path d="M3 18L15 8" stroke="#444"/><path d="M3 18L5 12L8 15Z" fill="#444"/><path d="M10 6H19" stroke="#222" stroke-width="2" stroke-dasharray="2 1"/><path d="M7 2L8 4H10L8.500 5.500L9 8L7 6.500L5 8L5.500 5.500L4 4H6Z" fill="#ffe040"/></symbol>
<symbol id="dbx" viewBox="0 0 20 20"><rect x="5" y="6" width="12" height="12" fill="none" stroke="#556" stroke-dasharray="1 1"/><path d="M5 2L6 4H8L6.500 5.500L7 8L5 6.500L3 8L3.500 5.500L2 4H4Z" fill="#ffe040" stroke="#887010" stroke-width=".4"/></symbol>
<symbol id="ss" viewBox="0 0 20 20"><rect x="6" y="8" width="11" height="9" fill="#4a88d8" stroke="#123"/><path d="M5 2L6 4H8L6.500 5.500L7 8L5 6.500L3 8L3.500 5.500L2 4H4Z" fill="#ffe040" stroke="#887010" stroke-width=".4"/><rect x="4" y="7" width="3" height="3" fill="#e01818"/></symbol>
<symbol id="rsq" viewBox="0 0 20 20"><rect x="3" y="3" width="14" height="14" fill="#8aa0d0" stroke="#223"/><rect x="6" y="6" width="8" height="8" fill="#ccd" stroke="#d01010" stroke-width="2"/></symbol>
<symbol id="brs" viewBox="0 0 20 20"><path d="M4 6L8 4V14L4 16ZM12 5L16 3V13L12 15Z" fill="#5a80c0" stroke="#234"/><path d="M10 2V18" stroke="#d01010" stroke-width="1.500"/><path d="M2 10H18" stroke="#223"/></symbol>
<symbol id="cb3" viewBox="0 0 20 20"><path d="M3 5L12 2L17 5V15L8 18L3 15Z" fill="#7aa0d8" stroke="#123"/><path d="M3 5L8 8L17 5M8 8V18" stroke="#123" fill="none"/><rect x="7" y="2" width="10" height="4" fill="#e8eef8" stroke="#234"/></symbol>
<symbol id="cb4" viewBox="0 0 20 20"><rect x="8" y="2" width="9" height="9" fill="#fff" stroke="#556"/><path d="M3 8H13V18H3Z" fill="#4a88d8" stroke="#123"/><path d="M4 1L5 3H7L5.500 4.500L6 7L4 5.500L2 7L2.500 4.500L1 3H3Z" fill="#ffe040"/></symbol>
<symbol id="edt" viewBox="0 0 20 20"><path d="M3 4H10V8H3ZM3 13H10V18H3Z" fill="#fffbe0" stroke="#444"/><path d="M12 9L17 11L12 14Z" fill="#2040c0"/><path d="M6 8V13M10 6L13 9" stroke="#444"/><rect x="14" y="8" width="4" height="4" fill="#ffe040" stroke="#444"/></symbol>
<symbol id="dnr" viewBox="0 0 20 20"><path d="M3 2L4 4H6L4.500 5.500L5 8L3 6.500L1 8L1.500 5.500L0 4H2Z" fill="#ffe040"/><path d="M11 3V15" stroke="#2050b0" stroke-width="2.500"/><path d="M7 13L11 18L15 13Z" fill="#e02020"/></symbol>
<symbol id="mlt" viewBox="0 0 20 20"><path d="M3 2L4 4H6L4.500 5.500L5 8L3 6.500L1 8L1.500 5.500L0 4H2Z" fill="#ffe040"/><rect x="5" y="6" width="11" height="10" fill="none" stroke="#aab"/><path d="M8 6V13M13 6V13" stroke="#7090c0" stroke-width="2"/><path d="M6 14L8 18L10 14ZM11 14L13 18L15 14Z" fill="#c05050"/></symbol>
<symbol id="mlb" viewBox="0 0 20 20"><path d="M3 2L4 4H6L4.500 5.500L5 8L3 6.500L1 8L1.500 5.500L0 4H2Z" fill="#ffe040"/><rect x="5" y="6" width="12" height="10" fill="none" stroke="#335"/><path d="M8 6V13M13 6V13" stroke="#3050b0" stroke-width="2"/><path d="M6 14L8 18L10 14ZM11 14L13 18L15 14Z" fill="#d02020"/></symbol>
<symbol id="flm" viewBox="0 0 20 20"><rect x="4" y="3" width="12" height="14" fill="#3a6aa8" stroke="#123"/><rect x="7" y="6" width="6" height="8" fill="#bcd"/><path d="M4 3V17M16 3V17" stroke="#111" stroke-width="2" stroke-dasharray="2 1"/></symbol>
<symbol id="stb" viewBox="0 0 20 20"><path d="M5 2L6 4H8L6.500 5.500L7 8L5 6.500L3 8L3.500 5.500L2 4H4Z" fill="#ffe040"/><path d="M5 11L12 8L17 11V16L10 19L5 16Z" fill="#4a88d8" stroke="#123"/><path d="M13 2V9" stroke="#2050b0" stroke-width="2"/></symbol>
<symbol id="nut" viewBox="0 0 20 20"><path d="M5 3H11L16 9V15L9 18L4 12Z" fill="#8a7a6a" stroke="#222"/><path d="M6 6L14 14M14 6L6 14" stroke="#222" stroke-dasharray="1 1"/><path d="M2 2L18 18" stroke="#4a3a2a"/></symbol>
<symbol id="zw" viewBox="0 0 20 20"><circle cx="8" cy="8" r="6" fill="#e8f4ff" stroke="#123" stroke-width="1.400"/><path d="M12 12L18 18" stroke="#235" stroke-width="2.500"/><path d="M14 2V10" stroke="#d01010"/><path d="M10 2H16" stroke="#d01010"/></symbol>
<symbol id="zx" viewBox="0 0 20 20"><circle cx="8" cy="8" r="6" fill="#e8f4ff" stroke="#123" stroke-width="1.400"/><path d="M12 12L18 18" stroke="#235" stroke-width="2.500"/><path d="M4 4L12 12M12 4L4 12" stroke="#d01010" stroke-width="2"/></symbol>
<symbol id="wir" viewBox="0 0 20 20"><path d="M3 5L8 2H17V15L12 18H3ZM3 5H12V18M12 5L17 2" fill="#d6e2f2" fill-opacity=".7" stroke="#667"/></symbol>
<symbol id="sol" viewBox="0 0 20 20"><path d="M2 9L6 7H12V17L8 18H2Z" fill="#c8d6ea" stroke="#778"/><path d="M9 3L13 2H18V11L14 13H9Z" fill="#e8eef8" stroke="#778"/></symbol>
<symbol id="ax" viewBox="0 0 20 20"><path d="M4 3V16" stroke="#2050c0" stroke-width="2"/><path d="M4 3H16" stroke="#20a040" stroke-width="2"/><path d="M16 3L12 1V5Z" fill="#20a040"/><path d="M4 18L2 14H6Z" fill="#2050c0"/></symbol>
<symbol id="ay" viewBox="0 0 20 20"><path d="M16 3V16" stroke="#2050c0" stroke-width="2"/><path d="M4 3H16" stroke="#d02020" stroke-width="2"/><path d="M4 3L8 1V5Z" fill="#d02020"/><path d="M16 18L14 14H18Z" fill="#2050c0"/></symbol>
<symbol id="az" viewBox="0 0 20 20"><path d="M4 3V16" stroke="#20a040" stroke-width="2"/><path d="M4 3H16" stroke="#d02020" stroke-width="2"/><path d="M16 3L12 1V5Z" fill="#d02020"/><path d="M4 18L2 14H6Z" fill="#20a040"/></symbol>
<symbol id="an" viewBox="0 0 20 20"><path d="M16 3V16" stroke="#2050c0" stroke-width="2"/><path d="M4 3H16" stroke="#20a040" stroke-width="2"/><circle cx="16" cy="3" r="2" fill="#e01010"/><path d="M16 18L14 14H18Z" fill="#2050c0"/></symbol>
<symbol id="mic" viewBox="0 0 20 20"><rect x="2" y="1" width="8" height="8" fill="#ffe040" stroke="#333"/><path d="M9 4L14 13M5 17H17M14 13L11 17" stroke="#111" stroke-width="2"/></symbol>
<symbol id="shd" viewBox="0 0 20 20"><path d="M5 3L12 2L16 6V13L10 18L5 14Z" fill="#8898b0" stroke="#567"/><path d="M9 5V11L13 13" stroke="#dde" fill="none"/></symbol>
<symbol id="nnn" viewBox="0 0 20 20"><path d="M3 18L5 5L16 3L18 14" fill="none" stroke="#222" stroke-width="1.500"/><path d="M9 4V12" stroke="#222"/><g fill="#e01010"><rect x="3" y="3" width="3" height="3"/><rect x="15" y="2" width="3" height="3"/></g><rect x="2" y="16" width="3" height="3" fill="#28a"/></symbol>
<symbol id="pil" viewBox="0 0 20 20"><rect x="2" y="5" width="16" height="10" rx="4" fill="#b8b8b0" stroke="#444"/><rect x="7" y="9" width="6" height="3" fill="#d03030"/><rect x="13" y="7" width="3" height="3" fill="#4070d0"/></symbol>
<symbol id="ibm" viewBox="0 0 20 20"><path d="M7 2H13M10 2V11M7 11H13" stroke="#667" fill="none"/><path d="M2 18L18 12V16L8 18Z" fill="#e08090"/><path d="M2 18H8L2 20Z" fill="#6070e0"/></symbol>
<symbol id="rbw" viewBox="0 0 20 20"><path d="M2 10L10 3L18 8L10 17Z" fill="url(#rb)" stroke="#445"/></symbol>
<symbol id="cbc" viewBox="0 0 20 20"><path d="M4 4L14 2L18 5V15L8 18L3 15Z" fill="#9ab0c0" stroke="#667"/><ellipse cx="10" cy="10" rx="5" ry="6" fill="url(#rb)" opacity=".7"/></symbol>
<symbol id="sup" viewBox="0 0 20 20"><path d="M10 8L5 12H15Z" fill="#208a30"/><circle cx="10" cy="7" r="3" fill="#2a9a40"/><path d="M14 5L19 3" stroke="#208a30" stroke-width="2"/><path d="M2 6L7 6" stroke="#208a30" stroke-width="2"/><path d="M10 12V18" stroke="#208a30" stroke-width="2.500"/></symbol>
<symbol id="sec" viewBox="0 0 20 20"><path d="M4 11L15 3L17 5L6 13Z" fill="#9ab" stroke="#345"/><path d="M2 18L18 10V14L8 18Z" fill="#d22"/><path d="M2 18H8L2 20Z" fill="#2040c0"/></symbol>
<symbol id="ysq" viewBox="0 0 20 20"><g fill="#ffe87a" stroke="#444"><rect x="2" y="3" width="7" height="6" rx="1"/><rect x="11" y="3" width="7" height="6" rx="1"/><rect x="2" y="11" width="7" height="6" rx="1"/><rect x="11" y="11" width="7" height="6" rx="1"/></g></symbol>
<symbol id="wav" viewBox="0 0 20 20"><path d="M7 2H13M10 2V10M7 10H13" stroke="#889"/><path d="M2 14C6 8 8 20 12 14S16 12 18 14" stroke="#c06070" fill="none" stroke-width="1.300"/><path d="M2 18H18" stroke="#7080e0"/></symbol>
<symbol id="tcl" viewBox="0 0 20 20"><rect x="2" y="2" width="16" height="16" fill="#dde" stroke="#334"/><path d="M2 6H18M2 10H18M2 14H18" stroke="#223"/><rect x="3" y="3" width="5" height="3" fill="#2050c0"/><rect x="3" y="7" width="5" height="3" fill="#20a040"/><rect x="3" y="11" width="5" height="3" fill="#e0c020"/><rect x="3" y="15" width="5" height="3" fill="#d03030"/></symbol>
<symbol id="bkc" viewBox="0 0 20 20"><rect x="4" y="2" width="13" height="16" fill="#fff" stroke="#333"/><path d="M6 6H15" stroke="#d03030" stroke-width="2"/><path d="M6 9H15" stroke="#20a040" stroke-width="2"/><path d="M6 12H15" stroke="#2050c0" stroke-width="2"/><path d="M6 15H15" stroke="#333"/></symbol>
<symbol id="sta" viewBox="0 0 20 20"><path d="M7 2L8.500 5.500H12L9.500 8L10.500 11L7 9L4 11L5 8L2.500 5.500H6Z" fill="#ffe040" stroke="#887010" stroke-width=".5"/><path d="M8 17L18 9" stroke="#333" stroke-width="2"/></symbol>
<symbol id="chk" viewBox="0 0 20 20"><rect x="3" y="2" width="15" height="16" fill="#fff" stroke="#445"/><path d="M4 6L14 18" stroke="#e01010" stroke-width="3"/><path d="M4 11L10 18" stroke="#f0d000" stroke-width="3"/><path d="M4 15L7 18" stroke="#20a040" stroke-width="3"/><path d="M10 10L17 2" stroke="#e0c020" stroke-width="2"/></symbol>
<symbol id="pan" viewBox="0 0 20 20"><rect x="5" y="1" width="12" height="10" fill="#4a5ab0"/><circle cx="11" cy="6" r="2.500" fill="none" stroke="#a0a8e0" stroke-dasharray="1 1"/><path d="M2 13H8M2 16H8" stroke="#111" stroke-width="1.500"/><rect x="10" y="12" width="8" height="7" fill="#fff" stroke="#111" stroke-width="1.600"/></symbol>
<symbol id="tsa" viewBox="0 0 20 20"><rect x="3" y="3" width="14" height="14" fill="#dde8d0" stroke="#345"/><path d="M5 15L15 5M11 15L15 11" stroke="#0a8a30" stroke-width="1.600"/><path d="M5 15H15" stroke="#345"/></symbol>
<symbol id="tbd" viewBox="0 0 20 20"><rect x="3" y="3" width="14" height="14" fill="#7a8a9a" stroke="#223"/><rect x="6" y="6" width="8" height="8" fill="#dde" stroke="#224"/><path d="M10 8V12M8 10L10 13L12 10" stroke="#223" fill="none"/></symbol>
<symbol id="tbc" viewBox="0 0 20 20"><rect x="3" y="3" width="14" height="14" fill="#7a8a9a" stroke="#223"/><path d="M5 14L15 5" stroke="#d02020" stroke-width="2"/><path d="M5 14H15" stroke="#2050c0" stroke-width="2"/></symbol>
<symbol id="tbf" viewBox="0 0 20 20"><rect x="3" y="3" width="14" height="14" fill="#dadce6" stroke="#bbb"/><path d="M5 10C7 5 9 15 11 10S14 6 15 10" stroke="#e0a0a0" fill="none"/></symbol>
<symbol id="lft" viewBox="0 0 20 20"><rect x="3" y="4" width="14" height="12" fill="#ccd" stroke="#667"/><path d="M15 9H8V6L3 10L8 14V11H15Z" fill="#4a78d0" stroke="#224"/></symbol>
<symbol id="rgt" viewBox="0 0 20 20"><rect x="3" y="4" width="14" height="12" fill="#ccd" stroke="#667"/><path d="M5 9H12V6L17 10L12 14V11H5Z" fill="#4a78d0" stroke="#224"/></symbol>
<symbol id="arc" viewBox="0 0 20 20"><path d="M5 3H12C15 3 15 8 12 9V13H8L10 17" fill="none" stroke="#222" stroke-width="1.800"/></symbol>
<symbol id="tgr" viewBox="0 0 20 20"><rect x="3" y="3" width="14" height="14" fill="#d8dcf0" stroke="#8890c8"/><path d="M3 7H17M3 11H17M8 3V17M13 3V17" stroke="#7078c0"/></symbol>
<symbol id="tgy" viewBox="0 0 20 20"><rect x="3" y="4" width="14" height="13" fill="#e8e4c8" stroke="#998"/><path d="M8 14L15 4" stroke="#e0b020" stroke-width="2"/></symbol>
<symbol id="flt" viewBox="0 0 20 20"><rect x="9" y="2" width="8" height="7" fill="#fff" stroke="#445"/><path d="M3 6H13L9 12V18L7 16V12Z" fill="#3a6ab0" stroke="#123"/></symbol>
<symbol id="pinf" viewBox="0 0 20 20"><circle cx="12" cy="7" r="5" fill="#b0b8d0"/><path d="M12 4V9" stroke="#fff" stroke-width="2"/><path d="M3 14L9 9L10 14L6 18Z" fill="#f0d8d8" stroke="#c88"/></symbol>
<symbol id="tree" viewBox="0 0 20 20"><path d="M4 4H12M4 9H15M4 14H10" stroke="#6a8a9a" stroke-width="2"/><path d="M3 2V17H17" stroke="#889" fill="none"/></symbol>
<symbol id="xls" viewBox="0 0 20 20"><rect x="2" y="2" width="16" height="16" fill="#fff" stroke="#0a7a30" stroke-width="1.500"/><path d="M6 5L14 15M14 5L6 15" stroke="#0a7a30" stroke-width="2.500"/></symbol>
<symbol id="cal" viewBox="0 0 20 20"><rect x="3" y="3" width="14" height="14" fill="#667" stroke="#223"/><rect x="5" y="5" width="10" height="3" fill="#dde"/><path d="M5 11H15M5 14H15" stroke="#eee" stroke-width="1.600" stroke-dasharray="1.500 1"/></symbol>
<symbol id="dat" viewBox="0 0 20 20"><rect x="4" y="2" width="11" height="14" fill="#ffe9a0" stroke="#a08030"/><rect x="4" y="2" width="11" height="3" fill="#2a5ab0"/><circle cx="11" cy="12" r="3" fill="#cdf" stroke="#246"/><path d="M13 14L17 18" stroke="#246" stroke-width="2"/></symbol>
<symbol id="dsp" viewBox="0 0 20 20"><path d="M4 5H14V18H4Z" fill="#eaf0fa" stroke="#2a4a90"/><path d="M6 8H12M6 11H12M6 14H12" stroke="#2a4a90"/><path d="M7 2L15 5" stroke="#776" stroke-width="3"/></symbol>
<symbol id="vws" viewBox="0 0 20 20"><path d="M3 18H15M9 17L12 8M12 8L15 2M6 13L12 11" stroke="#3a5ab0" stroke-width="1.800" fill="none"/><path d="M7 15L9 9L12 13Z" fill="#8ab0e0"/></symbol>
<symbol id="tab1" viewBox="0 0 20 20"><rect x="3" y="3" width="14" height="14" fill="#fff" stroke="#334"/><rect x="4" y="4" width="5" height="3" fill="#2050c0"/><rect x="4" y="8" width="5" height="3" fill="#20c040"/><rect x="4" y="12" width="5" height="4" fill="#e03030"/><path d="M11 6H16M11 10H16M11 14H16" stroke="#445"/></symbol>
<symbol id="tab2" viewBox="0 0 20 20"><path d="M10 2V16M3 6H17M5 16H15" stroke="#333" stroke-width="1.300"/><path d="M3 6L1 12H6ZM17 6L14 12H19Z" fill="#e8c060" stroke="#664"/></symbol>
<symbol id="tab3" viewBox="0 0 20 20"><path d="M4 17L13 3L16 6L7 18Z" fill="#ddd" stroke="#334"/><path d="M3 18H17" stroke="#334" stroke-width="1.600"/><path d="M8 14L12 8" stroke="#456"/></symbol>
</defs>

<!-- window icon + controls -->
<path d="M3 9L12 4L18 7V18L8 22L3 18Z" fill="#506080" stroke="#334"/><path d="M9 9L17 6V16L9 20Z" fill="#8a9ab0"/><text x="3" y="22" font-family="Liberation Sans,sans-serif" font-size="11" font-weight="bold" fill="#e8b020">5</text>
<path d="M1737 12H1747" stroke="#111"/><path d="M1782 8H1790V16H1782ZM1785 8V5H1793V13H1790" fill="none" stroke="#111"/><path d="M1828 6L1838 17M1838 6L1828 17" stroke="#111"/>
<path d="M1813 48H1820" stroke="#999" stroke-width="2"/><rect x="1829" y="41" width="8" height="7" fill="none" stroke="#999" stroke-width="1.500"/><path d="M1845 41L1853 49M1853 41L1845 49" stroke="#999" stroke-width="2"/>
<rect x="10" y="28" width="16" height="14" fill="#1a3a78"/><path d="M11 36L18 30L25 36M18 30V41M13 38H23" stroke="#fff" fill="none"/>

<!-- grips -->
<g fill="#9aa0ac"><path d="M5 52h2v2H5zM5 57h2v2H5zM5 62h2v2H5zM5 67h2v2H5zM5 78h2v2H5zM5 83h2v2H5zM5 88h2v2H5zM5 93h2v2H5zM870 52h2v2h-2zM870 57h2v2h-2zM870 62h2v2h-2zM870 67h2v2h-2zM1198 52h2v2h-2zM1198 57h2v2h-2zM1198 62h2v2h-2zM1198 67h2v2h-2zM641 78h2v2h-2zM641 83h2v2h-2zM641 88h2v2h-2zM641 93h2v2h-2zM949 78h2v2h-2zM949 83h2v2h-2zM949 88h2v2h-2zM949 93h2v2h-2zM1302 78h2v2h-2zM1302 83h2v2h-2zM1302 88h2v2h-2zM1302 93h2v2h-2z"/></g>
<!-- separators -->
<path d="M190 51v18M241 51v18M360 51v18M410 51v18M794 51v18M1034 51v18M145 77v18M215 77v18M301 77v18M472 77v18M760 77v18M1003 77v18M1200 77v18" stroke="#aab0bc"/>
<!-- highlights row 1 -->
<g fill="url(#hl)" stroke="#c8a468"><rect x="364.500" y="49.500" width="21" height="21" rx="2"/><rect x="386.500" y="49.500" width="21" height="21" rx="2"/><rect x="746.500" y="49.500" width="21" height="21" rx="2"/><rect x="768.500" y="49.500" width="21" height="21" rx="2"/><rect x="920.500" y="49.500" width="21" height="21" rx="2"/>
<rect x="476.500" y="75.500" width="34" height="21" rx="2"/><rect x="1029.500" y="75.500" width="21" height="21" rx="2"/><rect x="1094.500" y="75.500" width="21" height="21" rx="2"/><rect x="1204.500" y="75.500" width="21" height="21" rx="2"/>
<rect x="370.500" y="791.500" width="21" height="21" rx="2"/><rect x="470.500" y="791.500" width="20" height="21" rx="2"/><rect x="491.500" y="791.500" width="20" height="21" rx="2"/></g>
<rect x="893" y="791" width="21" height="22" rx="2" fill="#e4e6ec" stroke="#aab"/>
<!-- row 1 -->
<use href="#doc" x="11" y="50" width="20" height="20"/><use href="#open" x="33" y="50" width="20" height="20"/><use href="#cab" x="55" y="50" width="20" height="20"/><use href="#cabb" x="77" y="50" width="20" height="20"/><use href="#save" x="98" y="50" width="20" height="20"/><use href="#clip" x="120" y="50" width="20" height="20"/><use href="#print" x="142" y="50" width="20" height="20"/><use href="#prev" x="166" y="50" width="20" height="20"/><use href="#undo" x="194" y="50" width="20" height="20"/><use href="#redo" x="217" y="50" width="20" height="20"/><use href="#para" x="247" y="50" width="20" height="20"/><use href="#tgt" x="269" y="50" width="20" height="20"/><use href="#tgt2" x="291" y="50" width="20" height="20"/><use href="#stc" x="313" y="50" width="20" height="20"/><use href="#win" x="335" y="50" width="20" height="20"/><use href="#list" x="365" y="50" width="20" height="20"/><use href="#tbl" x="387" y="50" width="20" height="20"/><use href="#stdn" x="415" y="50" width="20" height="20"/>
<path d="M645 58L651 58L648 62Z" fill="#667"/>
<use href="#la" x="659" y="50" width="20" height="20"/><use href="#ra" x="680" y="50" width="20" height="20"/><use href="#pin" x="702" y="50" width="20" height="20"/><use href="#xxd" x="725" y="50" width="20" height="20"/><use href="#eye" x="747" y="50" width="20" height="20"/><use href="#xxo" x="769" y="50" width="20" height="20"/><use href="#hook" x="799" y="50" width="20" height="20"/><use href="#bar1" x="821" y="50" width="20" height="20"/><use href="#bar1" x="843" y="50" width="20" height="20"/><use href="#hand" x="877" y="50" width="20" height="20"/><use href="#node" x="899" y="50" width="20" height="20"/><use href="#cube" x="921" y="50" width="20" height="20"/><use href="#pln1" x="944" y="50" width="20" height="20"/><use href="#pln2" x="966" y="50" width="20" height="20"/><use href="#grd" x="987" y="50" width="20" height="20"/><use href="#bolt" x="1009" y="50" width="20" height="20"/><use href="#rt1" x="1039" y="50" width="20" height="20"/><use href="#rt2" x="1061" y="50" width="20" height="20"/><use href="#mir" x="1083" y="50" width="20" height="20"/><use href="#xr" x="1104" y="50" width="20" height="20"/><use href="#inf" x="1126" y="50" width="20" height="20"/><use href="#gear" x="1148" y="50" width="20" height="20"/><use href="#grs" x="1170" y="50" width="20" height="20"/><use href="#bkr" x="1206" y="50" width="20" height="20"/><use href="#bkr" x="1228" y="50" width="20" height="20"/><use href="#ptr" x="1249" y="50" width="20" height="20"/><use href="#ptr" x="1271" y="50" width="20" height="20"/>
<!-- row 2 -->
<use href="#st" x="10" y="76" width="20" height="20"/><use href="#ln" x="46" y="76" width="20" height="20"/><use href="#xl" x="70" y="76" width="20" height="20"/><use href="#clk" x="105" y="76" width="20" height="20"/><use href="#prs" x="146" y="76" width="20" height="20"/><use href="#prs2" x="168" y="76" width="20" height="20"/><use href="#plt" x="190" y="76" width="20" height="20"/><use href="#dim" x="222" y="76" width="20" height="20"/><use href="#xxa" x="252" y="76" width="20" height="20"/><use href="#dbx" x="277" y="76" width="20" height="20"/><use href="#ss" x="310" y="76" width="20" height="20"/><use href="#rsq" x="344" y="76" width="20" height="20"/><use href="#brs" x="380" y="76" width="20" height="20"/><use href="#cb3" x="420" y="76" width="20" height="20"/><use href="#cb4" x="436" y="76" width="20" height="20"/><use href="#edt" x="480" y="76" width="20" height="20"/><use href="#dnr" x="511" y="76" width="20" height="20"/><use href="#mlt" x="533" y="76" width="20" height="20"/><use href="#mlb" x="556" y="76" width="20" height="20"/><use href="#flm" x="579" y="76" width="20" height="20"/><use href="#stb" x="601" y="76" width="20" height="20"/><use href="#nut" x="650" y="76" width="20" height="20"/><use href="#zw" x="670" y="76" width="20" height="20"/><use href="#zx" x="692" y="76" width="20" height="20"/><use href="#wir" x="713" y="76" width="20" height="20"/><use href="#sol" x="735" y="76" width="20" height="20"/><use href="#ax" x="767" y="76" width="20" height="20"/><use href="#ay" x="789" y="76" width="20" height="20"/><use href="#az" x="811" y="76" width="20" height="20"/><use href="#an" x="833" y="76" width="20" height="20"/><use href="#mic" x="866" y="76" width="20" height="20"/><use href="#shd" x="910" y="76" width="20" height="20"/><use href="#nnn" x="955" y="76" width="20" height="20"/><use href="#pil" x="976" y="76" width="20" height="20"/><use href="#ibm" x="1010" y="76" width="20" height="20"/><use href="#rbw" x="1030" y="76" width="20" height="20"/><use href="#cbc" x="1052" y="76" width="20" height="20"/><use href="#sup" x="1073" y="76" width="20" height="20"/><use href="#sec" x="1095" y="76" width="20" height="20"/><use href="#ysq" x="1120" y="76" width="20" height="20"/><use href="#wav" x="1153" y="76" width="20" height="20"/><use href="#tcl" x="1174" y="76" width="20" height="20"/><use href="#bkc" x="1205" y="76" width="20" height="20"/><use href="#sta" x="1230" y="76" width="20" height="20"/><use href="#chk" x="1264" y="76" width="20" height="20"/><use href="#pan" x="1311" y="76" width="20" height="20"/><use href="#pan" x="1346" y="76" width="20" height="20"/><use href="#pan" x="1381" y="76" width="20" height="20"/><use href="#pan" x="1416" y="76" width="20" height="20"/><use href="#pan" x="1451" y="76" width="20" height="20"/>
<!-- drop arrows -->
<g fill="#667"><path d="M37 85h5l-2.500 3zM129 85h5l-2.500 3zM246 85h5l-2.500 3zM334 85h5l-2.500 3zM368 85h5l-2.500 3zM403 85h5l-2.500 3zM461 85h5l-2.500 3zM503 85h5l-2.500 3zM626 85h5l-2.500 3zM857 85h5l-2.500 3zM892 85h5l-2.500 3zM935 85h5l-2.500 3zM1144 85h5l-2.500 3zM1253 85h5l-2.500 3zM1288 85h5l-2.500 3zM1336 85h5l-2.500 3zM1370 85h5l-2.500 3zM1405 85h5l-2.500 3zM1440 85h5l-2.500 3zM1475 85h5l-2.500 3zM94 85h5l-2.500 3z"/></g>

<!-- nav title buttons -->
<path d="M255 104h6v6h-6zM258 110v5M253 110h10" fill="none" stroke="#666"/><path d="M272 105L281 114M281 105L272 114" stroke="#666" stroke-width="1.300"/>
<path d="M1828 104h6v6h-6zM1831 110v5M1826 110h10" fill="none" stroke="#888"/><path d="M1844 105L1853 114M1853 105L1844 114" stroke="#888" stroke-width="1.200"/>
<path d="M1828 775h6v6h-6zM1831 781v5M1826 781h10" fill="none" stroke="#888"/><path d="M1844 776L1853 785M1853 776L1844 785" stroke="#888" stroke-width="1.200"/>

<!-- tree dots -->
<g stroke="#8a8a8a" stroke-dasharray="1 1" fill="none">
<path d="M14.500 136V509M33.500 154V419M52.500 190V383M71.500 208V347M33.500 514V563"/>
<path d="M19 131H27M19 149H27M38 167H46M38 185H46M57 203H65M72 221H84M72 239H84M72 257H84M72 275H84M72 293H84M72 311H84M72 329H84M72 347H84M57 365H65M57 383H65M38 401H46M38 419H46M19 437H27M19 455H27M19 473H27M19 491H27M19 509H27M34 527H46M34 545H46M34 563H46"/>
</g>
<g>
<use href="#ep" x="10" y="127" width="9" height="9"/><use href="#ex" x="10" y="145" width="9" height="9"/><use href="#ep" x="29" y="163" width="9" height="9"/><use href="#ex" x="29" y="181" width="9" height="9"/><use href="#ex" x="48" y="199" width="9" height="9"/><use href="#ep" x="48" y="361" width="9" height="9"/><use href="#ep" x="48" y="379" width="9" height="9"/><use href="#ep" x="29" y="397" width="9" height="9"/><use href="#ep" x="29" y="415" width="9" height="9"/><use href="#ep" x="10" y="433" width="9" height="9"/><use href="#ep" x="10" y="451" width="9" height="9"/><use href="#ep" x="10" y="469" width="9" height="9"/><use href="#ep" x="10" y="487" width="9" height="9"/><use href="#ex" x="10" y="505" width="9" height="9"/>
<use href="#cb" x="27" y="125" width="13" height="13"/><use href="#cc" x="27" y="143" width="13" height="13"/><use href="#cp" x="46" y="161" width="13" height="13"/><use href="#cp" x="46" y="179" width="13" height="13"/><use href="#cp" x="65" y="197" width="13" height="13"/><use href="#cp" x="65" y="359" width="13" height="13"/><use href="#cp" x="65" y="377" width="13" height="13"/><use href="#cp" x="46" y="395" width="13" height="13"/><use href="#cp" x="46" y="413" width="13" height="13"/><use href="#cb" x="27" y="431" width="13" height="13"/><use href="#cb" x="27" y="449" width="13" height="13"/><use href="#cc" x="27" y="467" width="13" height="13"/><use href="#cb" x="27" y="485" width="13" height="13"/><use href="#cp" x="27" y="503" width="13" height="13"/>
<use href="#rs" x="83" y="214" width="14" height="14"/><use href="#rd" x="83" y="232" width="14" height="14"/><use href="#rd" x="83" y="250" width="14" height="14"/><use href="#rd" x="83" y="268" width="14" height="14"/><use href="#rd" x="83" y="286" width="14" height="14"/><use href="#rd" x="83" y="304" width="14" height="14"/><use href="#rd" x="83" y="322" width="14" height="14"/><use href="#rd" x="83" y="340" width="14" height="14"/>
<use href="#rd" x="45" y="520" width="14" height="14"/><use href="#rs" x="45" y="538" width="14" height="14"/><use href="#rd" x="45" y="556" width="14" height="14"/>
<use href="#fr" x="42" y="124" width="16" height="14"/><use href="#sf" x="42" y="143" width="16" height="12"/><use href="#sf" x="61" y="161" width="16" height="12"/><use href="#sf" x="61" y="179" width="16" height="12"/><use href="#sf" x="80" y="197" width="16" height="12"/><use href="#sf" x="99" y="215" width="16" height="12"/><use href="#sf" x="99" y="233" width="16" height="12"/><use href="#sf" x="99" y="251" width="16" height="12"/><use href="#sf" x="99" y="269" width="16" height="12"/><use href="#sf" x="99" y="287" width="16" height="12"/><use href="#sf" x="99" y="305" width="16" height="12"/><use href="#sf" x="99" y="323" width="16" height="12"/><use href="#sf" x="99" y="341" width="16" height="12"/><use href="#sf" x="80" y="359" width="16" height="12"/><use href="#sf" x="80" y="377" width="16" height="12"/><use href="#sf" x="61" y="395" width="16" height="12"/><use href="#sf" x="61" y="413" width="16" height="12"/>
<use href="#fr" x="42" y="430" width="16" height="14"/><use href="#sup" x="42" y="447" width="17" height="17"/><use href="#sec" x="42" y="465" width="17" height="17"/>
<rect x="43.500" y="485.500" width="14" height="11" rx="1" fill="#ffe98a" stroke="#a89030"/><text x="46" y="494" font-family="Liberation Sans,sans-serif" font-size="8" fill="#222">XX</text>
<use href="#fr" x="42" y="502" width="16" height="14"/><use href="#fr" x="61" y="520" width="16" height="14"/><use href="#fr" x="61" y="538" width="16" height="14"/><use href="#fr" x="61" y="556" width="16" height="14"/>
</g>

<!-- legend -->
<g>
<rect x="1746" y="169" width="26" height="17" fill="#bf0000"/><rect x="1746" y="186" width="26" height="17" fill="#f00"/><rect x="1746" y="203" width="26" height="17" fill="#ffaa00"/><rect x="1746" y="220" width="26" height="17" fill="#d2d000"/><rect x="1746" y="237" width="26" height="17" fill="#ff0"/><rect x="1746" y="254" width="26" height="17" fill="#0f0"/><rect x="1746" y="271" width="26" height="17" fill="#00e484"/><rect x="1746" y="288" width="26" height="17" fill="#0ff"/><rect x="1746" y="305" width="26" height="17" fill="#0096ff"/><rect x="1746" y="322" width="26" height="17" fill="#00f"/><rect x="1746" y="339" width="26" height="18" fill="#00009a"/>
<path d="M1745.500 169V357M1772 169V357M1746 169H1778M1746 186H1778M1746 203H1778M1746 220H1778M1746 237H1778M1746 254H1778M1746 271H1778M1746 288H1778M1746 305H1778M1746 322H1778M1746 339H1778M1746 357H1778" stroke="#111" fill="none"/>
</g>
<use href="#zw" x="1832" y="557" width="16" height="16"/>
<use href="#tab1" x="1704" y="743" width="20" height="20"/><use href="#tab2" x="1733" y="743" width="20" height="20"/><use href="#tab3" x="1763" y="743" width="20" height="20"/>

<!-- nav tab icons -->
<use href="#dat" x="5" y="1037" width="20" height="20"/><use href="#dsp" x="58" y="1037" width="20" height="20"/><use href="#vws" x="124" y="1037" width="20" height="20"/><use href="#rbw" x="183" y="1037" width="20" height="20"/>

<!-- results toolbar -->
<use href="#tsa" x="298" y="792" width="20" height="20"/><use href="#tbd" x="321" y="792" width="20" height="20"/><use href="#tbd" x="343" y="792" width="20" height="20"/><use href="#tbc" x="371" y="792" width="20" height="20"/><use href="#tbf" x="387" y="792" width="20" height="20"/><use href="#lft" x="417" y="792" width="20" height="20"/><use href="#rgt" x="439" y="792" width="20" height="20"/><use href="#arc" x="471" y="792" width="20" height="20"/><use href="#arc" x="492" y="792" width="20" height="20"/><use href="#tgr" x="521" y="792" width="20" height="20"/><use href="#tgy" x="543" y="792" width="20" height="20"/>
<path d="M759 800h6l-3 4z" fill="#667"/>
<use href="#la" x="781" y="792" width="20" height="20"/><path d="M808 797L818 802L808 807Z" fill="#4a78e0"/>
<use href="#flt" x="833" y="792" width="20" height="20"/><use href="#pinf" x="863" y="792" width="20" height="20"/><use href="#tree" x="893" y="792" width="20" height="20"/><use href="#xls" x="923" y="792" width="20" height="20"/><use href="#cal" x="953" y="792" width="20" height="20"/>
<path d="M414 794v16M464 794v16M517 794v16M776 794v16M826 794v16M856 794v16M886 794v16M918 794v16M948 794v16" stroke="#b0b4c0"/>

<!-- table scroll arrows + tab nav -->
<path d="M1848 823L1844 829H1852Z" fill="#444"/><path d="M1848 1004L1844 998H1852Z" fill="#444"/>
<g><rect x="1794" y="1025" width="13" height="14" fill="#e4e4e4" stroke="#aaa"/><rect x="1810" y="1025" width="13" height="14" fill="#e4e4e4" stroke="#aaa"/><rect x="1826" y="1025" width="13" height="14" fill="#f4f4f4" stroke="#aaa"/><rect x="1842" y="1025" width="13" height="14" fill="#f4f4f4" stroke="#aaa"/>
<path d="M1798 1028v8M1803 1028L1799 1032L1803 1036ZM1818 1028L1814 1032L1818 1036Z" fill="#999" stroke="#999"/><path d="M1831 1028L1835 1032L1831 1036Z" fill="#111"/><path d="M1847 1028L1851 1032L1847 1036ZM1852 1028v8" fill="#111" stroke="#111"/></g>

<!-- annotation arrow -->
<path d="M150 541L545 454L542 444L574 452L548 473L547 464L152 552Q146 552 146 547Q146 542 150 541Z" fill="#000" opacity=".12" transform="translate(2 3)"/>
<path d="M150 541L545 454L542 444L574 452L548 473L547 464L152 552Q146 552 146 547Q146 542 150 541Z" fill="#e8504a"/>
</svg>
</body></html>
